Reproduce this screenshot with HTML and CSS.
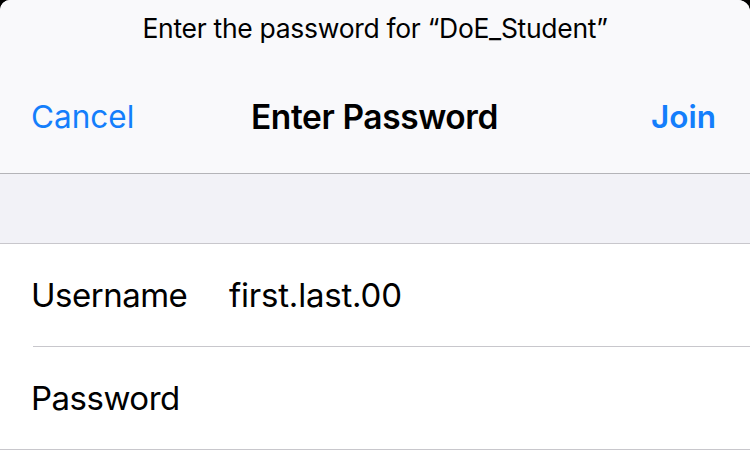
FILE: index.html
```html
<!DOCTYPE html>
<html lang="en">
<head>
<meta charset="utf-8">
<title>Enter Password</title>
<link rel="stylesheet" href="styles.css">
</head>
<body>
<div class="sheet">
  <header class="nav">
    <p class="prompt">Enter the password for “DoE_Student”</p>
    <div class="bar">
      <span class="btn cancel">Cancel</span>
      <span class="title">Enter Password</span>
      <span class="btn join">Join</span>
    </div>
  </header>
  <div class="gap"></div>
  <div class="group">
    <div class="row">
      <span class="label">Username</span>
      <span class="value">first.last.00</span>
    </div>
    <div class="row">
      <span class="label">Password</span>
      <span class="value"></span>
    </div>
  </div>
  <div class="rest"></div>
</div>
</body>
</html>
```
FILE: styles.css
```css
html, body {
  margin: 0;
  padding: 0;
  background: #000;
  height: 100%;
}
body {
  font-family: Inter, "Noto Sans", sans-serif;
  color: #000;
  overflow: hidden;
}
.sheet {
  width: 750px;
  height: 453px;
  background: #fff;
  border-radius: 10px 12px 0 0;
  overflow: hidden;
  display: flex;
  flex-direction: column;
}
.nav {
  height: 173px;
  background: #f9f9fb;
  border-bottom: 1px solid #b4b4b8;
  display: flex;
  flex-direction: column;
  flex-shrink: 0;
}
.prompt {
  margin: 0;
  padding-top: 13px;
  height: 30px;
  line-height: 30px;
  text-align: center;
  font-size: 26.5px;
  letter-spacing: -0.3px;
}
.bar {
  margin-top: 57px;
  height: 34px;
  display: grid;
  grid-template-columns: 1fr auto 1fr;
  align-items: center;
  padding: 0 34px 0 31px;
  font-size: 31.5px;
  line-height: 34px;
}
.btn {
  color: #147efb;
}
.cancel {
  justify-self: start;
}
.join {
  justify-self: end;
  font-weight: 600;
}
.title {
  font-weight: 600;
  font-size: 33.5px;
  letter-spacing: -0.4px;
  margin-left: 2px;
}
.gap {
  height: 69px;
  background: #f2f2f7;
  border-bottom: 1px solid #c8c7cc;
  flex-shrink: 0;
}
.group {
  background: #fff;
  border-bottom: 1px solid #c8c7cc;
  padding-left: 33px;
  flex-shrink: 0;
}
.row {
  height: 102px;
  display: flex;
  align-items: center;
  font-size: 33px;
  letter-spacing: -0.5px;
}
.row + .row {
  border-top: 1px solid #c8c7cc;
}
.label {
  width: 198px;
  margin-left: -2px;
  flex-shrink: 0;
}
.value {
  letter-spacing: -0.2px;
}
.rest {
  flex: 1;
  background: #fff;
}
```
